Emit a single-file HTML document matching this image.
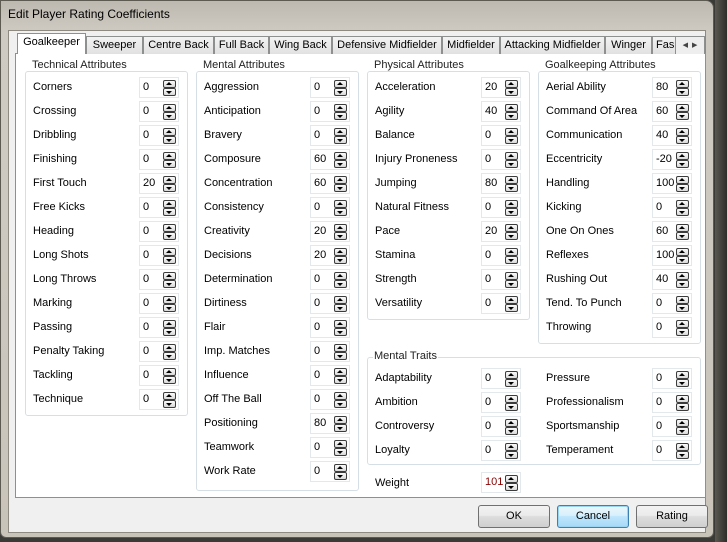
<!DOCTYPE html>
<html><head><style>
*{margin:0;padding:0;box-sizing:border-box}
body{width:727px;height:542px;overflow:hidden;background:#3a3a36;font-family:"Liberation Sans",Arial,sans-serif;font-size:11px;color:#000;position:relative}
.frame{position:absolute;left:0;top:0;width:714px;height:538px;border-radius:0 8px 6px 6px;background:linear-gradient(180deg,#bdb9b0 0%,#cfcbc3 6%,#c9c4ba 100%);border:1px solid #5d5a52}
.title{position:absolute;left:8px;top:7px;font-size:12px;color:#000}
.body{position:absolute;left:8px;top:30px;width:698px;height:503px;background:#f0f0f0;border:1px solid #8e8a82}
.panel{position:absolute;left:15px;top:53px;width:691px;height:445px;background:#fff;border:1px solid #8e8f8f}
.tab{position:absolute;top:36px;height:18px;background:linear-gradient(#f3f3f3,#e1e1e1);border:1px solid #8e8f8f;border-bottom:none;font-size:11px;line-height:17px;text-align:center}
.tab.sel{top:33px;height:21px;background:#fff;z-index:2}
.grp{position:absolute;border:1px solid #d5dfe5;border-radius:3px}
.lg{position:absolute;background:#fff;padding:0 1px;font-size:11px;color:#222}
.l{position:absolute;font-size:11px;line-height:13px}
.b{position:absolute;width:40px;height:21px;border:1px solid #e3e8ec;background:#fff}
.b span{position:absolute;left:3px;top:3px;font-size:11px}
.b i,.b u{position:absolute;left:23px;width:13px;height:8px;border:1px solid #3c3c3c;border-radius:2px;background:linear-gradient(#fbfbfb,#d9d9d9)}
.b i{top:2px}.b u{top:10px}
.b i:after{content:"";position:absolute;left:2px;top:1px;border:3.5px solid transparent;border-bottom:3.5px solid #000;border-top:0}
.b u:after{content:"";position:absolute;left:2px;top:2px;border:3.5px solid transparent;border-top:3.5px solid #000;border-bottom:0}
.btn{position:absolute;top:505px;width:72px;height:23px;border:1px solid #707070;border-radius:3px;background:linear-gradient(#f2f2f2 0%,#ebebeb 45%,#dddddd 50%,#cfcfcf 100%);text-align:center;line-height:21px;font-size:11px}
.side{position:absolute;left:715px;top:0;width:12px;height:542px;background:linear-gradient(90deg,#5a5850,#2e2d2a)}
</style></head><body>
<div class="side"></div>
<div class="frame"></div>
<div class="title">Edit Player Rating Coefficients</div>
<div class="body"></div>
<div class="panel"></div>
<div class="tab sel" style="left:17px;width:69px">Goalkeeper</div>
<div class="tab" style="left:86px;width:57px">Sweeper</div>
<div class="tab" style="left:143px;width:71px">Centre Back</div>
<div class="tab" style="left:214px;width:55px">Full Back</div>
<div class="tab" style="left:269px;width:63px">Wing Back</div>
<div class="tab" style="left:332px;width:110px">Defensive Midfielder</div>
<div class="tab" style="left:442px;width:58px">Midfielder</div>
<div class="tab" style="left:500px;width:105px">Attacking Midfielder</div>
<div class="tab" style="left:605px;width:47px">Winger</div>
<div class="tab" style="left:652px;width:30px;text-align:left;padding-left:3px">Fas</div>
<div class="tab" style="left:675px;width:30px;top:36px;background:#eee;font-size:7px;color:#444">&#9664;&nbsp;&nbsp;&#9654;</div>

<div class="grp" style="left:25px;top:71px;width:163px;height:345px"></div>
<div class="lg" style="left:31px;top:59px">Technical Attributes</div>
<div class="grp" style="left:196px;top:71px;width:163px;height:420px"></div>
<div class="lg" style="left:202px;top:59px">Mental Attributes</div>
<div class="grp" style="left:367px;top:71px;width:163px;height:249px"></div>
<div class="lg" style="left:373px;top:59px">Physical Attributes</div>
<div class="grp" style="left:538px;top:71px;width:163px;height:273px"></div>
<div class="lg" style="left:544px;top:59px">Goalkeeping Attributes</div>
<div class="grp" style="left:367px;top:357px;width:334px;height:108px"></div>
<div class="lg" style="left:373px;top:350px">Mental Traits</div>

<div class="l" style="left:33px;top:81px">Corners</div><div class="b" style="left:139px;top:77px"><span>0</span><i></i><u></u></div>
<div class="l" style="left:33px;top:105px">Crossing</div><div class="b" style="left:139px;top:101px"><span>0</span><i></i><u></u></div>
<div class="l" style="left:33px;top:129px">Dribbling</div><div class="b" style="left:139px;top:125px"><span>0</span><i></i><u></u></div>
<div class="l" style="left:33px;top:153px">Finishing</div><div class="b" style="left:139px;top:149px"><span>0</span><i></i><u></u></div>
<div class="l" style="left:33px;top:177px">First Touch</div><div class="b" style="left:139px;top:173px"><span>20</span><i></i><u></u></div>
<div class="l" style="left:33px;top:201px">Free Kicks</div><div class="b" style="left:139px;top:197px"><span>0</span><i></i><u></u></div>
<div class="l" style="left:33px;top:225px">Heading</div><div class="b" style="left:139px;top:221px"><span>0</span><i></i><u></u></div>
<div class="l" style="left:33px;top:249px">Long Shots</div><div class="b" style="left:139px;top:245px"><span>0</span><i></i><u></u></div>
<div class="l" style="left:33px;top:273px">Long Throws</div><div class="b" style="left:139px;top:269px"><span>0</span><i></i><u></u></div>
<div class="l" style="left:33px;top:297px">Marking</div><div class="b" style="left:139px;top:293px"><span>0</span><i></i><u></u></div>
<div class="l" style="left:33px;top:321px">Passing</div><div class="b" style="left:139px;top:317px"><span>0</span><i></i><u></u></div>
<div class="l" style="left:33px;top:345px">Penalty Taking</div><div class="b" style="left:139px;top:341px"><span>0</span><i></i><u></u></div>
<div class="l" style="left:33px;top:369px">Tackling</div><div class="b" style="left:139px;top:365px"><span>0</span><i></i><u></u></div>
<div class="l" style="left:33px;top:393px">Technique</div><div class="b" style="left:139px;top:389px"><span>0</span><i></i><u></u></div>

<div class="l" style="left:204px;top:81px">Aggression</div><div class="b" style="left:310px;top:77px"><span>0</span><i></i><u></u></div>
<div class="l" style="left:204px;top:105px">Anticipation</div><div class="b" style="left:310px;top:101px"><span>0</span><i></i><u></u></div>
<div class="l" style="left:204px;top:129px">Bravery</div><div class="b" style="left:310px;top:125px"><span>0</span><i></i><u></u></div>
<div class="l" style="left:204px;top:153px">Composure</div><div class="b" style="left:310px;top:149px"><span>60</span><i></i><u></u></div>
<div class="l" style="left:204px;top:177px">Concentration</div><div class="b" style="left:310px;top:173px"><span>60</span><i></i><u></u></div>
<div class="l" style="left:204px;top:201px">Consistency</div><div class="b" style="left:310px;top:197px"><span>0</span><i></i><u></u></div>
<div class="l" style="left:204px;top:225px">Creativity</div><div class="b" style="left:310px;top:221px"><span>20</span><i></i><u></u></div>
<div class="l" style="left:204px;top:249px">Decisions</div><div class="b" style="left:310px;top:245px"><span>20</span><i></i><u></u></div>
<div class="l" style="left:204px;top:273px">Determination</div><div class="b" style="left:310px;top:269px"><span>0</span><i></i><u></u></div>
<div class="l" style="left:204px;top:297px">Dirtiness</div><div class="b" style="left:310px;top:293px"><span>0</span><i></i><u></u></div>
<div class="l" style="left:204px;top:321px">Flair</div><div class="b" style="left:310px;top:317px"><span>0</span><i></i><u></u></div>
<div class="l" style="left:204px;top:345px">Imp. Matches</div><div class="b" style="left:310px;top:341px"><span>0</span><i></i><u></u></div>
<div class="l" style="left:204px;top:369px">Influence</div><div class="b" style="left:310px;top:365px"><span>0</span><i></i><u></u></div>
<div class="l" style="left:204px;top:393px">Off The Ball</div><div class="b" style="left:310px;top:389px"><span>0</span><i></i><u></u></div>
<div class="l" style="left:204px;top:417px">Positioning</div><div class="b" style="left:310px;top:413px"><span>80</span><i></i><u></u></div>
<div class="l" style="left:204px;top:441px">Teamwork</div><div class="b" style="left:310px;top:437px"><span>0</span><i></i><u></u></div>
<div class="l" style="left:204px;top:465px">Work Rate</div><div class="b" style="left:310px;top:461px"><span>0</span><i></i><u></u></div>

<div class="l" style="left:375px;top:81px">Acceleration</div><div class="b" style="left:481px;top:77px"><span>20</span><i></i><u></u></div>
<div class="l" style="left:375px;top:105px">Agility</div><div class="b" style="left:481px;top:101px"><span>40</span><i></i><u></u></div>
<div class="l" style="left:375px;top:129px">Balance</div><div class="b" style="left:481px;top:125px"><span>0</span><i></i><u></u></div>
<div class="l" style="left:375px;top:153px">Injury Proneness</div><div class="b" style="left:481px;top:149px"><span>0</span><i></i><u></u></div>
<div class="l" style="left:375px;top:177px">Jumping</div><div class="b" style="left:481px;top:173px"><span>80</span><i></i><u></u></div>
<div class="l" style="left:375px;top:201px">Natural Fitness</div><div class="b" style="left:481px;top:197px"><span>0</span><i></i><u></u></div>
<div class="l" style="left:375px;top:225px">Pace</div><div class="b" style="left:481px;top:221px"><span>20</span><i></i><u></u></div>
<div class="l" style="left:375px;top:249px">Stamina</div><div class="b" style="left:481px;top:245px"><span>0</span><i></i><u></u></div>
<div class="l" style="left:375px;top:273px">Strength</div><div class="b" style="left:481px;top:269px"><span>0</span><i></i><u></u></div>
<div class="l" style="left:375px;top:297px">Versatility</div><div class="b" style="left:481px;top:293px"><span>0</span><i></i><u></u></div>

<div class="l" style="left:546px;top:81px">Aerial Ability</div><div class="b" style="left:652px;top:77px"><span>80</span><i></i><u></u></div>
<div class="l" style="left:546px;top:105px">Command Of Area</div><div class="b" style="left:652px;top:101px"><span>60</span><i></i><u></u></div>
<div class="l" style="left:546px;top:129px">Communication</div><div class="b" style="left:652px;top:125px"><span>40</span><i></i><u></u></div>
<div class="l" style="left:546px;top:153px">Eccentricity</div><div class="b" style="left:652px;top:149px"><span>-20</span><i></i><u></u></div>
<div class="l" style="left:546px;top:177px">Handling</div><div class="b" style="left:652px;top:173px"><span>100</span><i></i><u></u></div>
<div class="l" style="left:546px;top:201px">Kicking</div><div class="b" style="left:652px;top:197px"><span>0</span><i></i><u></u></div>
<div class="l" style="left:546px;top:225px">One On Ones</div><div class="b" style="left:652px;top:221px"><span>60</span><i></i><u></u></div>
<div class="l" style="left:546px;top:249px">Reflexes</div><div class="b" style="left:652px;top:245px"><span>100</span><i></i><u></u></div>
<div class="l" style="left:546px;top:273px">Rushing Out</div><div class="b" style="left:652px;top:269px"><span>40</span><i></i><u></u></div>
<div class="l" style="left:546px;top:297px">Tend. To Punch</div><div class="b" style="left:652px;top:293px"><span>0</span><i></i><u></u></div>
<div class="l" style="left:546px;top:321px">Throwing</div><div class="b" style="left:652px;top:317px"><span>0</span><i></i><u></u></div>

<div class="l" style="left:375px;top:372px">Adaptability</div><div class="b" style="left:481px;top:368px"><span>0</span><i></i><u></u></div>
<div class="l" style="left:375px;top:396px">Ambition</div><div class="b" style="left:481px;top:392px"><span>0</span><i></i><u></u></div>
<div class="l" style="left:375px;top:420px">Controversy</div><div class="b" style="left:481px;top:416px"><span>0</span><i></i><u></u></div>
<div class="l" style="left:375px;top:444px">Loyalty</div><div class="b" style="left:481px;top:440px"><span>0</span><i></i><u></u></div>
<div class="l" style="left:546px;top:372px">Pressure</div><div class="b" style="left:652px;top:368px"><span>0</span><i></i><u></u></div>
<div class="l" style="left:546px;top:396px">Professionalism</div><div class="b" style="left:652px;top:392px"><span>0</span><i></i><u></u></div>
<div class="l" style="left:546px;top:420px">Sportsmanship</div><div class="b" style="left:652px;top:416px"><span>0</span><i></i><u></u></div>
<div class="l" style="left:546px;top:444px">Temperament</div><div class="b" style="left:652px;top:440px"><span>0</span><i></i><u></u></div>

<div class="l" style="left:375px;top:477px">Weight</div><div class="b" style="left:481px;top:472px"><span style="color:#8b0000">101</span><i></i><u></u></div>

<div class="btn" style="left:478px">OK</div>
<div class="btn" style="left:557px;border-color:#3c7fb1;background:linear-gradient(#eaf6fd 0%,#d9f0fc 45%,#bee6fd 50%,#a7d9f5 100%);box-shadow:inset 0 0 0 1px #9ad4f3">Cancel</div>
<div class="btn" style="left:636px">Rating</div>
</body></html>
